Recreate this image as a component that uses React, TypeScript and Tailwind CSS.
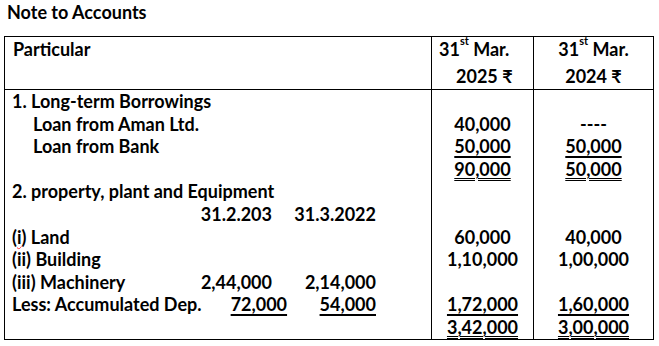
import React from 'react';

type Mark = 'u' | 'uu' | undefined;

const font = { fontFamily: 'Lato, "Noto Sans", "DejaVu Sans", sans-serif' };

const Fig = ({ v, m }: { v: string; m?: Mark }) => {
  if (!v) return <span>&nbsp;</span>;
  if (m === 'u') return <span className="underline decoration-[1.5px] underline-offset-[3px]">{v}</span>;
  if (m === 'uu') return <span className="underline decoration-double decoration-1 underline-offset-[2px]">{v}</span>;
  return <span>{v}</span>;
};

const cur2025: [string, Mark?][] = [
  ['40,000'], ['50,000', 'u'], ['90,000', 'uu'], [''], [''],
  ['60,000'], ['1,10,000'], [''], ['1,72,000', 'u'], ['3,42,000', 'uu'],
];
const cur2024: [string, Mark?][] = [
  ['----'], ['50,000', 'u'], ['50,000', 'uu'], [''], [''],
  ['40,000'], ['1,00,000'], [''], ['1,60,000', 'u'], ['3,00,000', 'uu'],
];

const Line = ({ children, className = '' }: { children?: React.ReactNode; className?: string }) => (
  <div className={`h-[22.6px] leading-[22.6px] whitespace-nowrap ${className}`}>{children}</div>
);

const SubRow = ({ label, a, b, mark }: { label: string; a: string; b: string; mark?: Mark }) => (
  <Line className="flex pl-[7px] pr-[55px]">
    <span className="flex-1">{label}</span>
    <span className="w-[100px] text-right"><Fig v={a} m={mark} /></span>
    <span className="w-[104px] text-right"><Fig v={b} m={mark} /></span>
  </Line>
);

export default function App() {
  return (
    <div className="w-[659px] h-[346px] bg-white text-black font-bold text-[18px]" style={font}>
      <div className="pl-[7px] pt-[1px] h-[36px] leading-[22px]">Note to Accounts</div>
      <div className="ml-[4px] w-[650px] border border-black grid grid-cols-[426px_102px_1fr]">
        {/* header */}
        <div className="h-[53px] border-b border-black pl-[8px] pt-[1px]">
          <Line>Particular</Line>
        </div>
        <div className="h-[53px] border-b border-l border-black pt-[1px]">
          <Line className="pl-[7px]">31<sup className="text-[11px] align-[6px]">st</sup> Mar.</Line>
          <Line className="pl-[24px] mt-[4px]">2025 ₹</Line>
        </div>
        <div className="h-[53px] border-b border-l border-black pt-[1px] text-center">
          <Line>31<sup className="text-[11px] align-[6px]">st</sup> Mar.</Line>
          <Line className="mt-[4px]">2024 ₹</Line>
        </div>

        {/* body */}
        <div>
          <Line className="pl-[7px]">1. Long-term Borrowings</Line>
          <Line className="pl-[28px]">Loan from Aman Ltd.</Line>
          <Line className="pl-[28px]">Loan from Bank</Line>
          <Line />
          <Line className="pl-[7px]">2. property, plant and Equipment</Line>
          <SubRow label="" a="31.2.203" b="31.3.2022" />
          <Line className="pl-[7px]">
            (<span className="underline decoration-wavy decoration-red-500 decoration-1">i</span>) Land
          </Line>
          <Line className="pl-[7px]">(ii) Building</Line>
          <SubRow label="(iii) Machinery" a="2,44,000" b="2,14,000" />
          <SubRow label="Less: Accumulated Dep." a="72,000" b="54,000" mark="u" />
          <Line />
        </div>
        <div className="border-l border-black text-center">
          <Line />
          {cur2025.map(([v, m], i) => (
            <Line key={i}><Fig v={v} m={m} /></Line>
          ))}
        </div>
        <div className="border-l border-black text-center">
          <Line />
          {cur2024.map(([v, m], i) => (
            <Line key={i}><Fig v={v} m={m} /></Line>
          ))}
        </div>
      </div>
    </div>
  );
}
